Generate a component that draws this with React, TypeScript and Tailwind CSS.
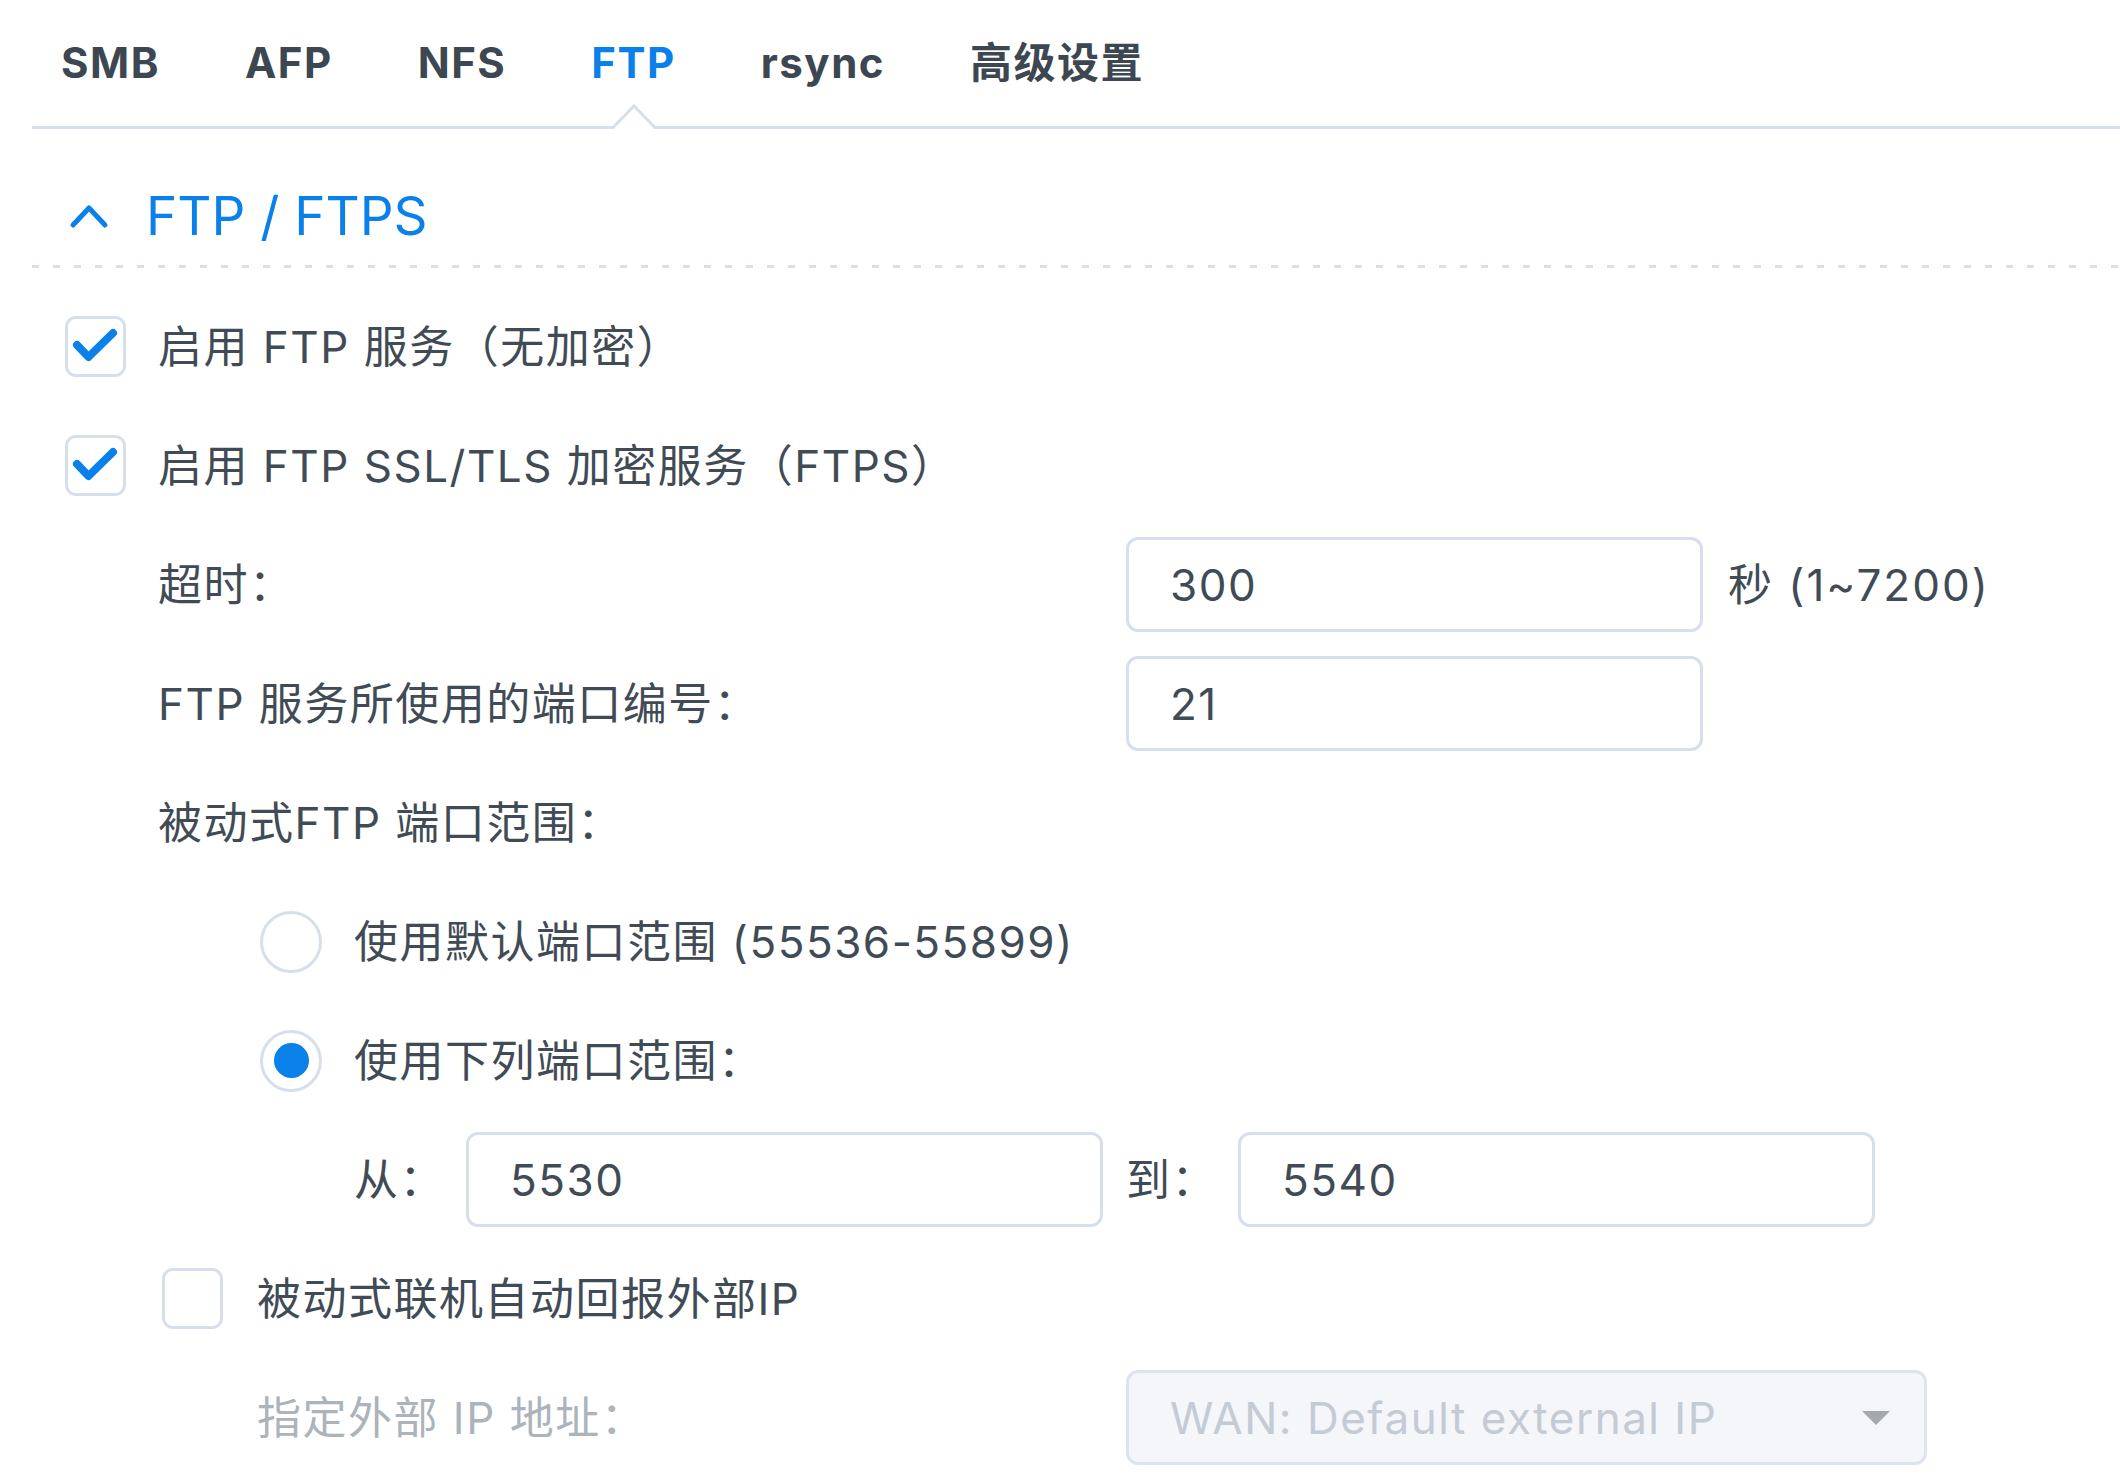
import { useState } from "react";

const tabs = ["SMB", "AFP", "NFS", "FTP", "rsync", "高级设置"];

function CheckBox({ checked }: { checked: boolean }) {
  return (
    <div className="relative h-[61px] w-[61px] shrink-0 rounded-[11px] border-[3px] border-[#d7e0ea] bg-white">
      {checked && (
        <svg className="absolute -inset-[3px]" viewBox="0 0 61 61" width="61" height="61">
          <path d="M12 29 L23.5 41 L48 17" fill="none" stroke="#0a80eb" strokeWidth="8" strokeLinecap="round" strokeLinejoin="round" />
        </svg>
      )}
    </div>
  );
}

function Radio({ checked }: { checked: boolean }) {
  return (
    <div className="flex h-[62px] w-[62px] shrink-0 items-center justify-center rounded-full border-[3px] border-[#d7e0ea] bg-white">
      {checked && <div className="h-[35px] w-[35px] rounded-full bg-[#0a80eb]" />}
    </div>
  );
}

function TextBox({ value, width }: { value: string; width: string }) {
  return (
    <div className={`flex h-[95px] shrink-0 items-center rounded-[12px] border-[3px] border-[#d7e0ea] bg-white pl-[41px] ${width}`}>
      {value}
    </div>
  );
}

function App() {
  const [active] = useState("FTP");

  return (
    <div className="min-h-screen bg-white font-['Inter','Noto_Sans_CJK_SC',sans-serif] text-[44px] tracking-[1.5px] text-[#414b56]">
      <div className="pl-[32px]">
        {/* tab bar */}
        <div className="flex h-[129px] items-stretch gap-[85px] border-b-[3px] border-[#d7e0ea] pl-[29px]">
          {tabs.map((t) => (
            <div key={t} className={`relative flex items-center pb-[2px] text-[42px] font-bold tracking-[1.5px] ${t === active ? "text-[#0a80eb]" : "text-[#3d4751]"}`}>
              {t}
              {t === active && (
                <svg className="absolute bottom-[-3px] left-1/2 -translate-x-1/2" width="46" height="26" viewBox="0 0 46 26">
                  <polygon points="0,26 23,2 46,26" fill="#fff" />
                  <polyline points="0,24.5 2,24.5 23,3 44,24.5 46,24.5" fill="none" stroke="#d7e0ea" strokeWidth="3" />
                </svg>
              )}
            </div>
          ))}
        </div>

        {/* section header */}
        <div className="flex h-[136px] items-center pt-[38px] tracking-normal text-[#0a80eb]">
          <svg className="ml-[37px]" width="40" height="26" viewBox="0 0 40 26">
            <polyline points="4,22 20,5 36,22" fill="none" stroke="#0a80eb" strokeWidth="5" strokeLinecap="round" strokeLinejoin="round" />
          </svg>
          <span className="ml-[37px] text-[53px] leading-none">FTP / FTPS</span>
        </div>
        <div className="h-[3px] bg-[linear-gradient(to_right,#d7e0ea_7px,transparent_7px)] bg-[length:21px_3px] bg-repeat-x" />

        <div className="pt-[19px]">
          <div className="flex h-[119px] items-center pl-[33px]">
            <CheckBox checked />
            <span className="ml-[32px]">启用 FTP 服务（无加密）</span>
          </div>
          <div className="flex h-[119px] items-center pl-[33px]">
            <CheckBox checked />
            <span className="ml-[32px]">启用 FTP SSL/TLS 加密服务（FTPS）</span>
          </div>
          <div className="flex h-[119px] items-center pl-[126px]">
            <span className="w-[968px] shrink-0">超时：</span>
            <TextBox value="300" width="w-[577px]" />
            <span className="ml-[25px] tracking-[2px]">秒 (1~7200)</span>
          </div>
          <div className="flex h-[119px] items-center pl-[126px]">
            <span className="w-[968px] shrink-0">FTP 服务所使用的端口编号：</span>
            <TextBox value="21" width="w-[577px]" />
          </div>
          <div className="flex h-[119px] items-center pl-[126px]">
            <span>被动式FTP 端口范围：</span>
          </div>
          <div className="flex h-[119px] items-center pl-[228px]">
            <Radio checked={false} />
            <span className="ml-[32px]">使用默认端口范围 (55536-55899)</span>
          </div>
          <div className="flex h-[119px] items-center pl-[228px]">
            <Radio checked />
            <span className="ml-[32px]">使用下列端口范围：</span>
          </div>
          <div className="flex h-[119px] items-center pl-[322px]">
            <span className="w-[112px] shrink-0">从：</span>
            <TextBox value="5530" width="w-[637px]" />
            <span className="ml-[23px] w-[112px] shrink-0">到：</span>
            <TextBox value="5540" width="w-[637px]" />
          </div>
          <div className="flex h-[119px] items-center pl-[130px]">
            <CheckBox checked={false} />
            <span className="ml-[34px]">被动式联机自动回报外部IP</span>
          </div>
          <div className="flex h-[119px] items-center pl-[225px]">
            <span className="w-[869px] shrink-0 text-[#acb3ba]">指定外部 IP 地址：</span>
            <div className="flex h-[95px] w-[801px] shrink-0 items-center justify-between rounded-[12px] border-[3px] border-[#dde4ec] bg-[#f4f6fa] pl-[41px] pr-[34px] text-[#c4cbd4]">
              <span>WAN: Default external IP</span>
              <svg width="28" height="14" viewBox="0 0 28 14">
                <polygon points="0,0 28,0 14,14" fill="#a4a9af" />
              </svg>
            </div>
          </div>
        </div>
      </div>
    </div>
  );
}

export default App;
